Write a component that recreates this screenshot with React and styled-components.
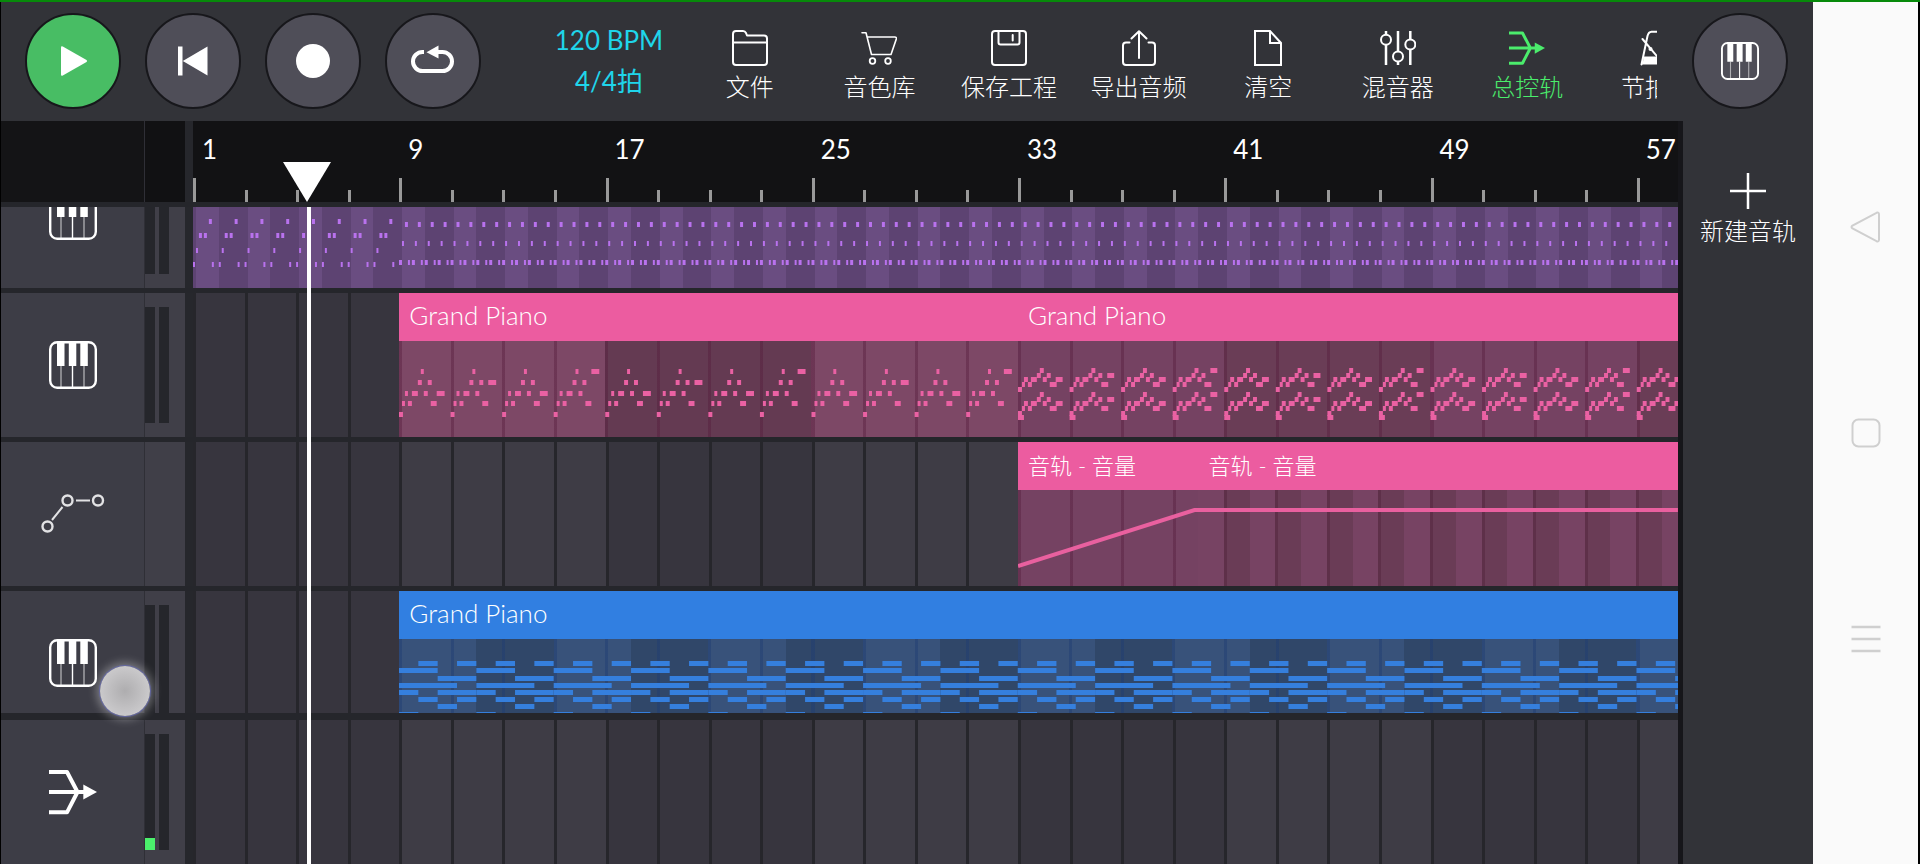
import React from 'react';
import styled, { createGlobalStyle, css } from 'styled-components';

// the window shows 28.8 grid cells, one cell is two bars
const CELLS = 28.8;
const CELL = `calc(100cqw / ${CELLS})`;
// drawing units per cell inside a clip
const UNIT = 52;
const BODY = 96;

const GlobalStyle = createGlobalStyle`
  * {
    box-sizing: border-box;
  }
  body {
    margin: 0;
    background: #000;
    font-family: Lato, 'Noto Sans CJK SC', sans-serif;
    font-weight: 300;
    color: #fff;
  }
  button {
    border: 0;
    padding: 0;
    background: none;
    font: inherit;
    color: inherit;
    cursor: pointer;
  }
  svg {
    display: block;
    flex-shrink: 0;
  }
`;

const Screen = styled.div`
  display: flex;
  height: 100vh;
  border-top: 2px solid #078a0a;
  padding: 0 2px 0 1px;
  overflow: hidden;
`;

const Studio = styled.div`
  position: relative;
  flex: 1;
  min-width: 0;
  display: flex;
  flex-direction: column;
  background: #323338;
`;

const Header = styled.header`
  display: flex;
  align-items: center;
  height: 119px;
  flex-shrink: 0;
  padding: 0 25px 2px 24px;
`;

const Transport = styled.div`
  display: flex;
  gap: 24px;
`;

const RoundButton = styled.button`
  display: flex;
  align-items: center;
  justify-content: center;
  width: 96px;
  height: 96px;
  border-radius: 50%;
  border: 2px solid #17171b;
  background: ${(props) => (props.$active ? '#48bd64' : '#4f4e58')};
`;

const Tempo = styled.button`
  width: 152px;
  margin-left: 52px;
  font-size: 26px;
  font-weight: 400;
  line-height: 41px;
  text-align: center;
  color: #1fd5ea;
  span {
    display: block;
  }
`;

const Tools = styled.nav`
  flex: 1;
  min-width: 0;
  align-self: stretch;
  display: flex;
  margin-right: 35px;
  padding-top: 28px;
  overflow: hidden;
`;

const Tool = styled.button`
  flex: 0 0 calc(100% / 7.5);
  display: flex;
  flex-direction: column;
  align-items: center;
  justify-content: flex-start;
  gap: 8px;
  font-size: 24px;
  line-height: 26px;
  white-space: nowrap;
  color: ${(props) => (props.$active ? '#4bec6c' : '#fff')};
`;

const Workspace = styled.div`
  flex: 1;
  min-height: 0;
  display: flex;
`;

const Arranger = styled.main`
  position: relative;
  flex: 1;
  min-width: 0;
  display: flex;
  flex-direction: column;
  background: #25262b;
  border-right: 5px solid #16161a;
`;

const Row = styled.div`
  display: flex;
  flex: 0 0 auto;
  height: ${(props) => props.$height || '144px'};
`;

const HeadCell = styled.div`
  width: 143px;
  display: flex;
  align-items: center;
  justify-content: center;
  background: ${(props) => (props.$ruler ? '#141416' : '#3d3d46')};
`;

const MeterCell = styled.div`
  display: flex;
  gap: 4px;
  width: 49px;
  padding: 14px 0;
  border-left: 1px solid #2f2f36;
  border-right: 8px solid #26272c;
  background: ${(props) => (props.$ruler ? '#111113' : '#403f48')};
`;

const Meter = styled.div`
  display: flex;
  flex-direction: column;
  justify-content: flex-end;
  width: 10px;
  background: #25262b;
`;

const MeterLevel = styled.div`
  background: #4bf06c;
`;

const Lane = styled.div`
  position: relative;
  flex: 1;
  min-width: 0;
  container-type: inline-size;
  overflow: hidden;
  background: ${(props) =>
    props.$ruler
      ? '#121214'
      : `repeating-linear-gradient(90deg, #26262b 0 3px, transparent 3px calc(100% / ${CELLS})),
         repeating-linear-gradient(90deg,
           #37353e 0 calc(400% / ${CELLS}),
           #3e3c45 calc(400% / ${CELLS}) calc(800% / ${CELLS}))`};
`;

const Marks = styled.div`
  display: flex;
  height: 100%;
`;

const Mark = styled.div`
  flex: 0 0 ${CELL};
  display: flex;
  flex-direction: column;
  align-items: flex-start;
  justify-content: flex-end;
  padding-top: 9px;
  font-size: 26px;
  font-weight: 400;
  line-height: 38px;
  span {
    flex: 1;
    padding-left: 9px;
  }
  &::after {
    content: '';
    width: 3px;
    height: ${(props) => (props.$major ? '24px' : '12px')};
    background: #999;
  }
`;

const Marker = styled.svg`
  position: absolute;
  bottom: 0;
  left: 7.7%;
  transform: translateX(-50%);
`;

const TrackWindow = styled.div`
  flex: 1;
  min-height: 0;
  margin-top: 5px;
  overflow: hidden;
`;

const TrackList = styled.div`
  display: flex;
  flex-direction: column;
  gap: 5px;
  margin-top: ${(props) => -props.$scroll}px;
`;

const Master = styled.div`
  flex-shrink: 0;
  margin-top: 7px;
`;

const Clips = styled.div`
  display: flex;
  height: 100%;
`;

const ClipBox = styled.section`
  flex: 0 0 calc(${CELL} * ${(props) => props.$length});
  margin-left: calc(${CELL} * ${(props) => props.$offset || 0});
  display: flex;
  flex-direction: column;
  min-width: 0;
`;

const ClipTitle = styled.div`
  height: 48px;
  padding: 0 10px;
  font-size: ${(props) => (props.$cjk ? '22px' : '26px')};
  line-height: ${(props) => (props.$cjk ? '48px' : '44px')};
  white-space: nowrap;
  background: ${(props) => props.$color};
`;

const bars = (line) => css`
  repeating-linear-gradient(90deg, ${line} 0 3px, transparent 3px ${CELL})
`;

const stripes = (a, b, n) => css`
  repeating-linear-gradient(
    90deg,
    ${a} 0 calc(${CELL} * ${n}),
    ${b} calc(${CELL} * ${n}) calc(${CELL} * ${n * 2})
  )
`;

const skins = {
  purple: css`
    background: ${bars('#5d4372')}, ${stripes('#6a4d81', '#5d4372', 0.5)};
  `,
  pink: css`
    background: ${bars('rgba(84, 26, 58, 0.4)')}, ${stripes('#7d4866', '#643a52', 4)};
  `,
  rose: css`
    background: ${bars('rgba(84, 26, 58, 0.4)')}, ${stripes('#754262', '#6a3d56', 4)};
  `,
  fade: css`
    background: ${bars('rgba(84, 26, 58, 0.4)')}, #754262;
  `,
  level: css`
    background: repeating-linear-gradient(
      90deg,
      #774363 0 calc(${CELL} * 0.5),
      #5e3049 calc(${CELL} * 0.5) calc(${CELL} * 0.5 + 3px),
      #6a3c56 calc(${CELL} * 0.5 + 3px) ${CELL}
    );
  `,
  blue: css`
    background: ${bars('rgba(30, 60, 115, 0.45)')}, ${stripes('#38527a', '#304769', 1.5)};
  `,
};

const ClipBody = styled.div`
  flex: 1;
  ${(props) => skins[props.$skin]}
  svg {
    width: 100%;
    height: 96px;
  }
`;

const Playhead = styled.div`
  position: absolute;
  top: 86px;
  bottom: 0;
  left: 192px;
  right: 0;
  pointer-events: none;
  &::before {
    content: '';
    position: absolute;
    top: 0;
    bottom: 0;
    left: 7.7%;
    width: 4px;
    background: #fff;
  }
`;

const TouchPoint = styled.div`
  position: absolute;
  left: 99px;
  top: 664px;
  width: 50px;
  height: 50px;
  border-radius: 50%;
  background: radial-gradient(circle, #aeadaf 0, #cccbcd 75%);
  box-shadow: 0 0 1px 1px #6468a8, 0 0 9px 4px rgba(255, 255, 255, 0.3);
  pointer-events: none;
`;

const Sidebar = styled.aside`
  width: 130px;
  padding-top: 52px;
`;

const AddTrack = styled.button`
  width: 100%;
  display: flex;
  flex-direction: column;
  align-items: center;
  gap: 8px;
  font-size: 24px;
  line-height: 28px;
`;

const SystemBar = styled.nav`
  width: 105px;
  display: flex;
  flex-direction: column;
  align-items: center;
  justify-content: center;
  gap: 174px;
  background: #fafafa;
  color: #cfcfcf;
`;

const PianoIcon = ({ size = 48 }) => (
  <svg width={size} height={size} viewBox='0 0 48 48'>
    <rect x='1.2' y='1.2' width='45.6' height='45.6' rx='7' fill='none' stroke='#fff' strokeWidth='2.4' />
    <path d='M8 1h7.5v24H8zM19.8 1h7.5v24h-7.5zM31.3 1h7.5v24h-7.5z' fill='#fff' />
    <path d='M12 25v21M35 25v21' stroke='#fff' strokeWidth='1.4' opacity='0.55' />
    <path d='M23.5 25v21' stroke='#fff' strokeWidth='1.4' />
  </svg>
);

const MasterIcon = ({ size = 48 }) => (
  <svg width={size} height={size} viewBox='0 0 48 48' fill='none' stroke='currentColor' strokeWidth='4'>
    <path d='M0 4h18l10.5 20L18 44.300H0M0 24h36' strokeLinejoin='round' />
    <path d='M34.300 16.500v15L48 24z' fill='currentColor' stroke='none' />
  </svg>
);

const AutomationIcon = () => (
  <svg width='64' height='40' viewBox='0 0 64 40' fill='none' stroke='#e2e2e4' strokeWidth='2.4'>
    <circle cx='6.500' cy='32.500' r='5' />
    <circle cx='26.500' cy='6.500' r='5' />
    <circle cx='57' cy='6.500' r='5' />
    <path d='M11 26l10.500-13M35 6.500h14' strokeWidth='2' />
  </svg>
);

const ToolIcon = ({ children }) => (
  <svg
    width='36'
    height='36'
    viewBox='0 0 36 36'
    fill='none'
    stroke='currentColor'
    strokeWidth='2'
    strokeLinejoin='round'
    strokeLinecap='round'
  >
    {children}
  </svg>
);

const tools = [
  {
    label: '文件',
    icon: (
      <ToolIcon>
        <path d='M1 4q0-3 3-3h7q2 0 3 2l1 2.500h17q3 0 3 3V32q0 3-3 3H4q-3 0-3-3zM1 12.500h34' />
      </ToolIcon>
    ),
  },
  {
    label: '音色库',
    icon: (
      <ToolIcon>
        <path d='M1 2.700h4L10.500 24.500h19.500L35.300 9q.4-2-1.500-2H6.500' strokeWidth='1.6' />
        <circle cx='11.500' cy='31' r='2.800' strokeWidth='1.800' />
        <circle cx='27' cy='31' r='2.800' strokeWidth='1.800' />
      </ToolIcon>
    ),
  },
  {
    label: '保存工程',
    icon: (
      <ToolIcon>
        <rect x='1' y='1' width='34' height='34' rx='3' />
        <path d='M7.500 1v11.500q0 2 2 2h17q2 0 2-2V1M21.700 5v5.500' />
      </ToolIcon>
    ),
  },
  {
    label: '导出音频',
    icon: (
      <ToolIcon>
        <path d='M8.500 12.500H5q-3 0-3 3V32q0 3 3 3h26q3 0 3-3V15.500q0-3-3-3h-3.500M18 28V1.500M10.500 8.500L18 1.200l7.500 7.300' />
      </ToolIcon>
    ),
  },
  {
    label: '清空',
    icon: (
      <ToolIcon>
        <path d='M5 1h15l11 12v22H5zM20 1v12h11' strokeLinejoin='miter' />
      </ToolIcon>
    ),
  },
  {
    label: '混音器',
    icon: (
      <ToolIcon>
        <path d='M6 1v3.500M6 15v20M18 1v20M18 32v3M30.300 1v8M30.300 20v15' strokeWidth='2.500' strokeLinecap='butt' />
        <circle cx='6' cy='9.700' r='5' />
        <circle cx='18' cy='26.500' r='5' />
        <circle cx='30.300' cy='14.500' r='5' />
      </ToolIcon>
    ),
  },
  { label: '总控轨', icon: <MasterIcon size={36} />, active: true },
  {
    label: '节拍器',
    icon: (
      <ToolIcon>
        <path d='M2.500 34.500L8.500 6q1-4 4-4.200h11q3 .2 4 4.200l6 28.500M3.500 9L22 31' />
        <path d='M5 27h26l1.500 7H3.500z' fill='currentColor' strokeWidth='1' />
        <circle cx='11.500' cy='19' r='2' fill='currentColor' strokeWidth='0' />
      </ToolIcon>
    ),
  },
];

/* notes are [x, y, width] in drawing units */
const repeat = (notes, step, count) => {
  const out = [];
  for (let i = 0; i < count; i++) {
    notes.forEach(([x, y, w]) => out.push([x + i * step, y, w]));
  }
  return out;
};

// every fourth cell of a phrase ends on another pitch
const phrase = (notes, endings, count) => {
  const out = [];
  for (let i = 0; i < count; i++) {
    [...notes, ...endings[i % endings.length]].forEach(([x, y, w]) => out.push([x + i * UNIT, y, w]));
  }
  return out;
};

const introNotes = repeat(
  [[0, 70, 2], [3, 56, 2], [6, 41, 3], [11, 41, 3], [16, 27, 3], [19, 70, 2]],
  UNIT / 2,
  8
);

const pulseNotes = repeat([[0, 68, 3], [3, 49, 2], [6, 30, 3], [9, 68, 2]], UNIT / 4, 100);

const arpNotes = phrase(
  [
    [0, 71, 4], [3, 60, 3], [9, 60, 4], [32, 60, 6],
    [6, 50, 3], [13, 50, 6], [25, 50, 4],
    [19, 39, 4], [29, 39, 4],
    [22, 28, 3],
  ],
  [[[38, 50, 8]], [[38, 39, 8]], [[38, 50, 8]], [[38, 28, 8]]],
  12
);

const voice = (top) => [
  [0, top + 19, 4], [4, top + 14, 3], [6, top + 9, 4], [10, top + 14, 4], [13, top + 9, 6],
  [19, top + 5, 4], [22, top, 4], [25, top + 9, 4], [29, top + 5, 4], [32, top + 14, 7],
];

const duetNotes = phrase(
  [...voice(27), ...voice(51), [0, 74, 6]],
  [9, 5, 9, 0].map((d) => [[38, 27 + d, 7], [38, 51 + d, 7]]),
  13
);

const q = (UNIT * 3) / 8;
const chordNotes = repeat(
  [
    [q, 22, q], [3 * q, 22, q],
    [0, 29, 2 * q],
    [2 * q, 37, 2 * q],
    [0, 44, 3 * q],
    [0, 51, q], [2 * q, 51, 2 * q],
    [q, 58, q], [3 * q, 58, q],
    [2 * q, 65, q],
    [0, 73, q],
  ],
  4 * q,
  17
);

const Notes = ({ notes, length, color }) => (
  <svg viewBox={`0 0 ${length * UNIT} ${BODY}`} preserveAspectRatio='none' fill={color}>
    {notes.map(([x, y, w], i) => (
      <rect key={i} x={x} y={y} width={w} height='5' />
    ))}
  </svg>
);

const Curve = ({ points, length, color }) => (
  <svg viewBox={`0 0 ${length * UNIT} ${BODY}`} preserveAspectRatio='none'>
    <polyline points={points} fill='none' stroke={color} strokeWidth='4' />
  </svg>
);

const PURPLE = '#8d5bc0';
const PINK = '#ec5ca0';
const BLUE = '#317fe1';

const tracks = [
  {
    clips: [
      { length: 4, color: PURPLE, ink: '#b972ee', skin: 'purple', notes: introNotes },
      { length: 24.8, color: PURPLE, ink: '#b972ee', skin: 'purple', notes: pulseNotes },
    ],
  },
  {
    clips: [
      { title: 'Grand Piano', offset: 4, length: 12, color: PINK, ink: '#ea61a3', skin: 'pink', notes: arpNotes },
      { title: 'Grand Piano', length: 12.8, color: PINK, ink: '#ea61a3', skin: 'rose', notes: duetNotes },
    ],
  },
  {
    automation: true,
    clips: [
      { title: '音轨 - 音量', offset: 16, length: 3.5, color: PINK, ink: '#e9609f', skin: 'fade', points: '0,76 178,20 182,20' },
      { title: '音轨 - 音量', length: 9.3, color: PINK, ink: '#e9609f', skin: 'level', points: '0,20 484,20' },
    ],
  },
  {
    clips: [
      { title: 'Grand Piano', offset: 4, length: 24.8, color: BLUE, ink: '#357fdd', skin: 'blue', notes: chordNotes },
    ],
  },
];

const Clip = ({ clip }) => (
  <ClipBox $length={clip.length} $offset={clip.offset}>
    <ClipTitle $color={clip.color} $cjk={!!clip.points}>
      {clip.title}
    </ClipTitle>
    <ClipBody $skin={clip.skin}>
      {clip.notes && <Notes notes={clip.notes} length={clip.length} color={clip.ink} />}
      {clip.points && <Curve points={clip.points} length={clip.length} color={clip.ink} />}
    </ClipBody>
  </ClipBox>
);

const Meters = ({ level }) => (
  <>
    <Meter>{level && <MeterLevel style={{ height: `${level}%` }} />}</Meter>
    <Meter />
  </>
);

const App = () => {
  return (
    <Screen>
      <GlobalStyle />
      <Studio>
        <Header>
          <Transport>
            <RoundButton $active aria-label='播放'>
              <svg width='48' height='48' viewBox='0 0 48 48' fill='#fff'>
                <path d='M12 10.500q0-2 1.800-1L37.500 23q1.300 1 0 2L13.800 38.500q-1.800 1-1.800-1z' />
              </svg>
            </RoundButton>
            <RoundButton aria-label='回到开头'>
              <svg width='48' height='48' viewBox='0 0 48 48' fill='#fff'>
                <path d='M9 9.500h4.500v29H9zM13.800 24L38.500 9.500v29z' />
              </svg>
            </RoundButton>
            <RoundButton aria-label='录音'>
              <svg width='48' height='48' viewBox='0 0 48 48' fill='#fff'>
                <circle cx='24' cy='24' r='17' />
              </svg>
            </RoundButton>
            <RoundButton aria-label='循环'>
              <svg width='48' height='48' viewBox='0 0 48 48' fill='none' stroke='#fff' strokeWidth='4'>
                <path d='M15 15h-1.500a9.500 9.500 0 0 0 0 19h20a9.500 9.500 0 0 0 0-19H28' />
                <path d='M17.500 15.300L29.500 8.500v13z' fill='#fff' stroke='none' />
              </svg>
            </RoundButton>
          </Transport>
          <Tempo>
            <span>120 BPM</span>
            <span>4/4拍</span>
          </Tempo>
          <Tools>
            {tools.map((tool) => (
              <Tool key={tool.label} $active={tool.active}>
                {tool.icon}
                {tool.label}
              </Tool>
            ))}
          </Tools>
          <RoundButton aria-label='键盘'>
            <PianoIcon size={38} />
          </RoundButton>
        </Header>
        <Workspace>
          <Arranger>
            <Row $height='81px'>
              <HeadCell $ruler />
              <MeterCell $ruler />
              <Lane $ruler>
                <Marks>
                  {Array.from({ length: 29 }, (_, i) => (
                    <Mark key={i} $major={i % 4 === 0}>
                      {i % 4 === 0 && <span>{i * 2 + 1}</span>}
                    </Mark>
                  ))}
                </Marks>
                <Marker width='48' height='40' viewBox='0 0 48 40' fill='#fff'>
                  <path d='M0 0h48L24 40z' />
                </Marker>
              </Lane>
            </Row>
            <TrackWindow>
              <TrackList $scroll={63}>
                {tracks.map((track, i) => (
                  <Row key={i}>
                    <HeadCell>{track.automation ? <AutomationIcon /> : <PianoIcon />}</HeadCell>
                    <MeterCell>{!track.automation && <Meters />}</MeterCell>
                    <Lane>
                      <Clips>
                        {track.clips.map((clip, j) => (
                          <Clip key={j} clip={clip} />
                        ))}
                      </Clips>
                    </Lane>
                  </Row>
                ))}
              </TrackList>
            </TrackWindow>
            <Master>
              <Row>
                <HeadCell>
                  <MasterIcon />
                </HeadCell>
                <MeterCell>
                  <Meters level={10} />
                </MeterCell>
                <Lane />
              </Row>
            </Master>
            <Playhead />
          </Arranger>
          <Sidebar>
            <AddTrack>
              <svg width='36' height='36' viewBox='0 0 36 36' stroke='#fff' strokeWidth='2.500'>
                <path d='M0 18h36M18 0v36' />
              </svg>
              新建音轨
            </AddTrack>
          </Sidebar>
        </Workspace>
        <TouchPoint />
      </Studio>
      <SystemBar>
        <button aria-label='返回'>
          <svg width='32' height='32' viewBox='0 0 32 32' fill='none' stroke='currentColor' strokeWidth='2'>
            <path d='M26.500 1.800Q29 .8 29 3.500v25q0 2.700-2.500 1.700L2.500 17.500q-2-1.500 0-3z' />
          </svg>
        </button>
        <button aria-label='主屏幕'>
          <svg width='32' height='32' viewBox='0 0 32 32' fill='none' stroke='currentColor' strokeWidth='2'>
            <rect x='2.500' y='2.500' width='27' height='27' rx='6' />
          </svg>
        </button>
        <button aria-label='最近任务'>
          <svg width='32' height='32' viewBox='0 0 32 32' fill='none' stroke='currentColor' strokeWidth='2.500'>
            <path d='M1.500 4h29M1.500 16h29M1.500 28h29' />
          </svg>
        </button>
      </SystemBar>
    </Screen>
  );
};

export default App;
